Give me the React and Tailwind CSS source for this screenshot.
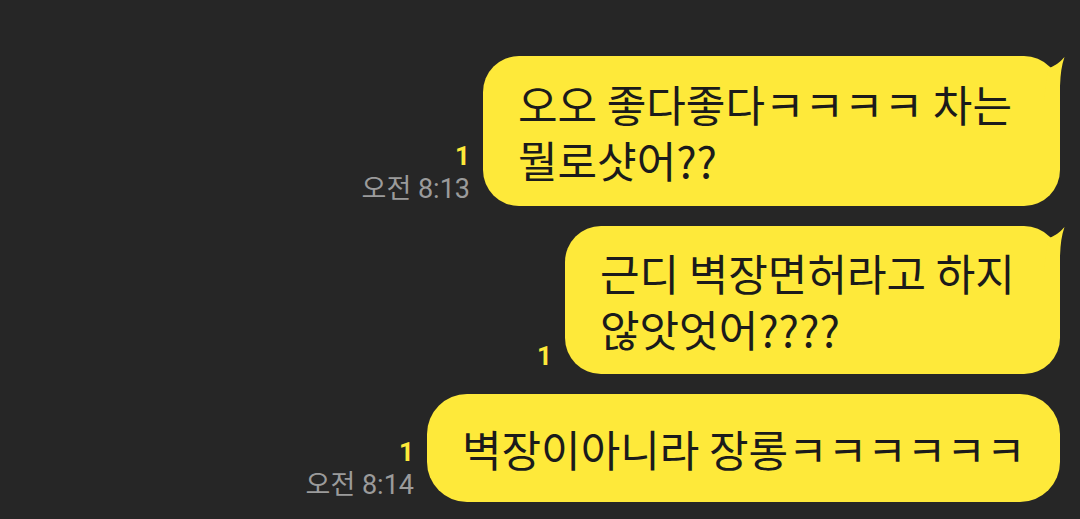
import React from "react";

const messages = [
  {
    lines: ["오오 좋다좋다ㅋㅋㅋㅋ 차는", "뭘로샷어??"],
    time: "오전 8:13",
    width: "w-[577px]",
    pad: "py-[19px]",
    tail: true,
  },
  {
    lines: ["근디 벽장면허라고 하지", "않앗엇어????"],
    time: null,
    width: "w-[495px]",
    pad: "py-[18px]",
    tail: true,
  },
  {
    lines: ["벽장이아니라 장롱ㅋㅋㅋㅋㅋㅋ"],
    time: "오전 8:14",
    width: "w-[633px]",
    pad: "py-[26px]",
    tail: false,
  },
];

// little horn at the top right of the bubble
function Tail() {
  return (
    <svg
      className="absolute right-[-6px] top-0"
      width="40"
      height="44"
      viewBox="0 0 40 44"
    >
      <path
        d="M22 12 Q31 10 38.5 1 Q34.5 12 34 30 L34 44 L18 44 Z"
        fill="#fee93a"
      />
    </svg>
  );
}

export default function App() {
  return (
    <div
      className="w-full h-[519px] bg-[#262626] flex flex-col items-end gap-[20px] pt-[56px] pr-[20px] overflow-hidden"
      style={{ fontFamily: "Roboto, 'Noto Sans CJK KR', sans-serif" }}
    >
      {messages.map((m, i) => (
        <div key={i} className="flex items-end gap-[13px]">
          <div className="flex flex-col items-end pb-[1px]">
            <span className="text-[26px] leading-[34px] font-bold text-[#fee93a]">1</span>
            {m.time && (
              <span className="text-[27px] leading-[32px] text-[#9b9b9b]">{m.time}</span>
            )}
          </div>
          <div
            className={`relative ${m.width} ${m.pad} px-[35px] bg-[#fee93a] text-[#1b1b1b] text-[43px] leading-[56px] ${
              m.tail ? "rounded-[36px]" : "rounded-[40px]"
            }`}
            style={{ fontFamily: "'Noto Sans CJK KR', sans-serif" }}
          >
            {m.tail && <Tail />}
            <div className="relative">
              {m.lines.map((l, j) => (
                <div key={j} className="whitespace-nowrap">
                  {l}
                </div>
              ))}
            </div>
          </div>
        </div>
      ))}
    </div>
  );
}
